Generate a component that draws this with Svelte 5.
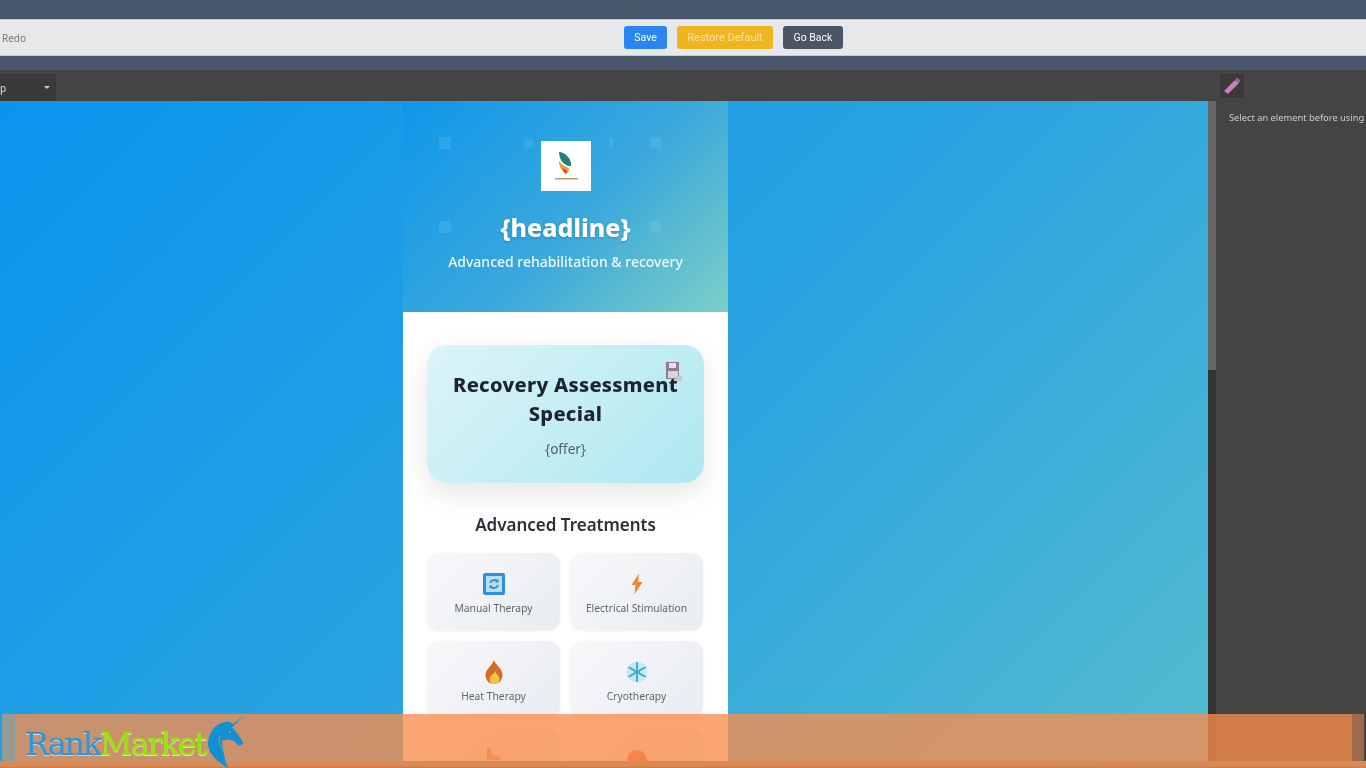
<script>
  const treatments = [
    { name: "Manual Therapy", icon: "cycle" },
    { name: "Electrical Stimulation", icon: "bolt" },
    { name: "Heat Therapy", icon: "fire" },
    { name: "Cryotherapy", icon: "snow" },
    { name: "", icon: "run" },
    { name: "", icon: "dot" }
  ];
</script>

<div class="app">
  <div class="topstrip"></div>
  <div class="toolbar">
    <span class="redo">Redo</span>
    <div class="actions">
      <button class="btn save">Save</button>
      <button class="btn restore">Restore Default</button>
      <button class="btn back">Go Back</button>
    </div>
  </div>
  <div class="midstrip"></div>
  <div class="tools">
    <div class="select"><span>p</span><i class="caret"></i></div>
    <div class="brush">
      <svg viewBox="0 0 20 20" width="20" height="20">
        <path d="M2 15 L13 4 L17 7 L6 18 Z" fill="#c77fc4" />
        <path d="M13 4 L15 1.5 L18.5 4.5 L17 7 Z" fill="#8a6a8a" />
      </svg>
    </div>
  </div>

  <div class="workspace">
    <div class="canvas">
      <div class="phone">
        <header class="hero">
          <svg class="pattern" viewBox="0 0 325 211" width="325" height="211">
            <g stroke="#fff" stroke-opacity="0.03" stroke-width="1.5" fill="none">
              <path d="M0 0 L42 42 L125 125 M42 42 L0 84 M42 42 L85 0 M42 126 L0 168 M42 126 L85 84" />
              <path d="M252 42 L210 0 M252 42 L295 0 M252 126 L295 170 M252 126 L210 170" />
            </g>
            <g fill="#fff" fill-opacity="0.09">
              <rect x="36" y="36" width="12" height="12" rx="2" />
              <rect x="121" y="38" width="9" height="9" rx="2" />
              <rect x="206" y="37" width="4" height="10" />
              <rect x="247" y="36" width="11" height="12" rx="2" />
              <rect x="36" y="120" width="12" height="12" rx="2" />
              <rect x="247" y="120" width="11" height="12" rx="2" />
            </g>
          </svg>
          <div class="logo">
            <svg viewBox="0 0 50 50" width="50" height="50">
              <path d="M18 11 C24 11 31 18 30 25 C25 26 18 20 18 11 Z" fill="#1f7f7c" />
              <path d="M18 20 C21 24 25 26 28 27 C28 30 27 32 25 33 C21 30 18 26 18 20 Z" fill="#ef9a3a" />
              <path d="M22 27 C24 28 25 29 26 30 L25 33 C24 32 22 30 22 27 Z" fill="#c9502f" />
              <rect x="14" y="37" width="23" height="1.5" fill="#b9a070" />
            </svg>
          </div>
          <h1>&#123;headline&#125;</h1>
          <p>Advanced rehabilitation &amp; recovery</p>
        </header>

        <main class="body">
          <section class="offer">
            <h2>Recovery Assessment Special</h2>
            <p>&#123;offer&#125;</p>
            <svg class="floppy" viewBox="0 0 18 21" width="18" height="21">
              <rect x="1" y="1" width="13" height="17" fill="#8c7f93" />
              <rect x="4" y="2" width="7" height="5" fill="#e6e1e8" />
              <rect x="3" y="10" width="10" height="7" fill="#d9d4dc" />
              <rect x="11" y="15" width="6" height="5" fill="#c9c6cc" />
            </svg>
          </section>

          <h3>Advanced Treatments</h3>

          <div class="grid">
            {#each treatments as t}
              <div class="card">
                <svg class="icon" viewBox="0 0 24 24" width="24" height="24">
                  {#if t.icon === "cycle"}
                    <rect x="1" y="1" width="22" height="22" rx="2" fill="#2f8fdc" />
                    <rect x="4" y="4" width="16" height="16" fill="#b5dff3" />
                    <path d="M8 11 A4.5 4.5 0 0 1 16 10 M16 13 A4.5 4.5 0 0 1 8 14" fill="none" stroke="#3b8ccb" stroke-width="1.8" />
                    <path d="M16.5 7 V10.5 H13 Z M7.5 17 V13.5 H11 Z" fill="#3b8ccb" />
                  {:else if t.icon === "bolt"}
                    <path d="M14 1.5 L6.5 13 H10.5 L9.5 22.5 L17.5 10 H13 Z" fill="#e98a3c" />
                  {:else if t.icon === "fire"}
                    <path d="M12 0 C13 5 20.5 8 20.5 15 C20.5 20 17 24 12 24 C7 24 3.5 20 3.5 15 C3.5 9 10 6 12 0 Z" fill="#d56c2b" />
                    <path d="M13 11 C14 14 17.5 15.5 17.5 19 C17.5 22 15 24 12.5 24 C9.5 24 7.5 22 7.5 19 C7.5 15.5 12 14.5 13 11 Z" fill="#f4c63f" />
                  {:else if t.icon === "snow"}
                    <circle cx="12" cy="12" r="10.5" fill="#c4e9f3" />
                    <g stroke="#3fa7c9" stroke-width="1.8" stroke-linecap="round">
                      <path d="M12 3 V21 M4.2 7.5 L19.8 16.5 M4.2 16.5 L19.8 7.5" />
                    </g>
                  {:else if t.icon === "run"}
                    <path d="M5 0 L9 0 L9 6 L18 9 L19 12 L5 12 Z" fill="#ee8f66" />
                  {:else}
                    <circle cx="12" cy="12" r="10" fill="#ee6a4c" />
                  {/if}
                </svg>
                {#if t.name}<span>{t.name}</span>{/if}
              </div>
            {/each}
          </div>
        </main>
      </div>
    </div>
    <div class="scrollbar"><div class="thumb"></div></div>
    <aside class="panel">Select an element before using</aside>
  </div>

  <div class="banner">
    <div class="stripes">
      <div class="edge-left"></div>
      <div class="fill"></div>
      <div class="edge-right"></div>
    </div>
    <div class="foot"></div>
    <div class="brand">
      <span class="rank">Rank</span><span class="market">Market</span>
      <svg class="unicorn" viewBox="0 0 38 53" width="38" height="53">
        <path d="M37 0 L24 12 L29 18 L35 27 Q36 29 31 31 L26 26 Q19 23 14 26 Q15 40 20 53 Q0 42 0 28 Q2 10 17 7 Q21 6 25 9 Z" fill="#1390d2" />
        <path d="M12 20 Q10 30 16 36" fill="none" stroke="#c8966e" stroke-width="0.8" />
        <circle cx="22" cy="17" r="1" fill="#c8966e" />
      </svg>
    </div>
  </div>
</div>

<style>
  :global(body) {
    margin: 0;
    overflow: hidden;
  }
  .app {
    position: relative;
    width: 1366px;
    height: 768px;
    overflow: hidden;
    display: flex;
    flex-direction: column;
    font-family: "Noto Sans", sans-serif;
    background: #444;
    filter: blur(0.6px);
  }
  .topstrip {
    height: 19px;
    background: #4a586b;
  }
  .toolbar {
    height: 37px;
    box-sizing: border-box;
    background: #e7e8ea;
    border-top: 1px solid #c6cad2;
    border-bottom: 1px solid #c6cad2;
    display: flex;
    align-items: center;
    position: relative;
    justify-content: center;
  }
  .redo {
    position: absolute;
    left: 2px;
    font-size: 10px;
    color: #777;
  }
  .actions {
    display: flex;
    gap: 10px;
    margin-left: 101px;
  }
  .btn {
    height: 23px;
    border: none;
    border-radius: 3px;
    padding: 0;
    font-family: "Roboto", sans-serif;
    font-size: 10.5px;
    font-weight: 400;
    color: #fff;
  }
  .save {
    width: 43px;
    background: #2a86ee;
  }
  .restore {
    width: 96px;
    font-size: 11px;
    background: #f0b41f;
    color: #f6e2a8;
  }
  .back {
    width: 60px;
    background: #4b5563;
  }
  .midstrip {
    height: 14px;
    background: #4a586b;
  }
  .tools {
    height: 31px;
    background: #444;
    display: flex;
    align-items: center;
    justify-content: space-between;
    padding-right: 122px;
  }
  .select {
    width: 56px;
    height: 28px;
    box-sizing: border-box;
    background: #3a3a3a;
    display: flex;
    align-items: center;
    justify-content: space-between;
    padding-right: 6px;
    font-size: 10px;
    color: #ddd;
    margin-top: 4px;
  }
  .caret {
    border-left: 3px solid transparent;
    border-right: 3px solid transparent;
    border-top: 3px solid #ccc;
  }
  .brush {
    width: 24px;
    height: 24px;
    background: #3a3a3a;
    display: flex;
    align-items: center;
    justify-content: center;
  }
  .workspace {
    flex: 1;
    min-height: 0;
    display: flex;
  }
  .canvas {
    flex: 0 0 1208px;
    display: flex;
    padding-left: 403px;
    box-sizing: border-box;
    overflow: hidden;
    background: linear-gradient(135deg, #0a94ee 0%, #2ba4e0 55%, #55bccf 100%);
  }
  .phone {
    width: 325px;
    background: #fff;
    flex: none;
  }
  .hero {
    position: relative;
    height: 211px;
    box-sizing: border-box;
    padding-top: 40px;
    text-align: center;
    color: #fff;
    background: linear-gradient(135deg, #0f97ea 0%, #3aa8dc 55%, #7ccfc6 100%);
  }
  .pattern {
    position: absolute;
    left: 0;
    top: 0;
  }
  .logo {
    position: relative;
    width: 50px;
    height: 50px;
    margin: 0 auto -1px;
    background: #fff;
  }
  .hero h1 {
    position: relative;
    margin: 20px 0 0;
    font-size: 25px;
    line-height: 34px;
    font-weight: 800;
    text-shadow: 0 1px 3px rgba(0, 0, 0, 0.2);
  }
  .hero p {
    position: relative;
    margin: 8px 0 0;
    font-size: 14px;
    line-height: 20px;
    font-weight: 500;
    color: #eef9fb;
  }
  .body {
    padding: 33px 24px 0;
  }
  .offer {
    position: relative;
    height: 138px;
    box-sizing: border-box;
    padding-top: 25px;
    text-align: center;
    border-radius: 20px;
    background: linear-gradient(135deg, #dcf4f8 0%, #aee8f0 100%);
    box-shadow: 0 10px 28px rgba(0, 0, 0, 0.1);
  }
  .floppy {
    position: absolute;
    left: 238px;
    top: 16px;
  }
  .offer h2 {
    margin: 0;
    font-size: 20px;
    line-height: 29px;
    font-weight: 800;
    letter-spacing: 0.3px;
    color: #1d2530;
  }
  .offer p {
    margin: 11px 0 0;
    font-size: 13.5px;
    line-height: 20px;
    color: #52606d;
  }
  h3 {
    margin: 30px 0 16px;
    text-align: center;
    font-size: 17px;
    line-height: 24px;
    font-weight: 600;
    color: #2a2f38;
  }
  .grid {
    display: grid;
    grid-template-columns: 133px 133px;
    grid-auto-rows: 77px;
    gap: 11px 10px;
  }
  .card {
    box-sizing: border-box;
    padding-top: 19px;
    border-radius: 12px;
    background: linear-gradient(135deg, #f7f8fa 0%, #e9ecf0 100%);
    box-shadow: 0 1px 3px rgba(0, 0, 0, 0.08);
    text-align: center;
  }
  .icon {
    display: block;
    margin: 0 auto;
  }
  .card span {
    display: block;
    margin-top: 4px;
    font-size: 10.3px;
    line-height: 16px;
    color: #5f6672;
  }
  .scrollbar {
    flex: 0 0 8px;
    background: #333;
  }
  .thumb {
    height: 269px;
    background: #666;
  }
  .panel {
    flex: 1;
    min-width: 0;
    box-sizing: border-box;
    padding: 10px 0 0 13px;
    background: #444;
    font-size: 9.3px;
    line-height: 14px;
    color: #ccc;
    white-space: nowrap;
  }
  .banner {
    position: absolute;
    left: 0;
    right: 0;
    bottom: 0;
    height: 54px;
    display: flex;
    flex-direction: column;
  }
  .stripes {
    flex: 1;
    display: flex;
    padding: 0 2px;
  }
  .edge-left {
    width: 13px;
    background: rgba(156, 154, 144, 0.95);
  }
  .fill {
    flex: 1;
    background: rgba(250, 141, 76, 0.78);
  }
  .edge-right {
    width: 12px;
    background: rgba(220, 130, 80, 0.6);
  }
  .foot {
    height: 7px;
    background: linear-gradient(#d98a55, #d98a55 70%, #c87a4a);
  }
  .brand {
    position: absolute;
    left: 25px;
    top: 8px;
    display: flex;
    align-items: flex-start;
    font-family: "DejaVu Serif", serif;
    font-size: 32px;
    line-height: 44px;
    letter-spacing: -2.2px;
    -webkit-text-stroke: 0.4px currentColor;
    text-shadow: 0 1px 0 rgba(255, 255, 255, 0.8);
  }
  .rank {
    color: #3793cf;
  }
  .market {
    color: #98e010;
  }
  .unicorn {
    position: absolute;
    left: 183px;
    top: -7px;
  }
</style>
